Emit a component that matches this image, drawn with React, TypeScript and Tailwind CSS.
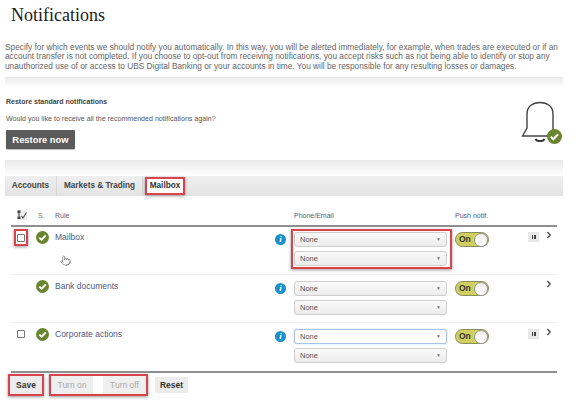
import { ChevronRight, Pointer } from "lucide-react";

const sans = "font-['Liberation_Sans',Arial,sans-serif]";

function CheckBadge({ className = "h-[13px] w-[13px]" }: { className?: string }) {
  return (
    <svg viewBox="0 0 14 14" className={className}>
      <circle cx="7" cy="7" r="7" fill="#6a8530" />
      <path d="M3.6 7.2 6 9.6 10.4 4.8" fill="none" stroke="#fff" strokeWidth="2" />
    </svg>
  );
}

function Bell() {
  return (
    <div className="relative h-[42px] w-[42px]">
      <svg viewBox="0 0 42 42" className="h-full w-full">
        <path
          d="M1.500 36 6 28V14C6 6 12 2.500 19 2.500S32 6 32 14V36Z"
          fill="none"
          stroke="#444"
          strokeWidth="1.400"
        />
        <path d="M14.500 39C16 42 22 42 23.500 39" fill="none" stroke="#333" strokeWidth="1.800" />
      </svg>
      <CheckBadge className="absolute left-[25.500px] top-[28.500px] h-[15px] w-[15px]" />
    </div>
  );
}

function Info() {
  return (
    <div className="flex h-[11px] w-[11px] items-center justify-center rounded-full bg-[#1b8fca] font-['Liberation_Serif',serif] text-[9px] font-bold italic leading-none text-white">
      i
    </div>
  );
}

function Dropdown({ focused = false }: { focused?: boolean }) {
  return (
    <div
      className={`flex h-[15px] w-[153px] items-center justify-between rounded-[3px] border pl-[5px] pr-[5px] text-[7.500px] text-[#555] ${
        focused
          ? "border-[#a9c3e6] bg-white shadow-[0_0_2px_#b9d0ee]"
          : "border-[#cfcfcf] bg-gradient-to-b from-[#fafafa] to-[#ececec]"
      }`}
    >
      <span>None</span>
      <span className="text-[5px] text-[#777]">▼</span>
    </div>
  );
}

function Toggle() {
  return (
    <div className="flex h-[15px] w-[34px] items-center justify-between rounded-full border border-[#8a8a5a] bg-[#cfd060] pl-[3px] text-[8.500px] font-bold leading-none text-[#333]">
      <span>On</span>
      <span className="h-[14px] w-[14px] rounded-full border border-[#999] bg-gradient-to-b from-[#eee] to-[#fff]" />
    </div>
  );
}

function Row({
  name,
  box,
  pause,
  outlined,
  focused,
  boxOutlined,
  extra,
  last,
}: {
  name: string;
  box?: boolean;
  pause?: boolean;
  outlined?: boolean;
  focused?: boolean;
  boxOutlined?: boolean;
  extra?: boolean;
  last?: boolean;
}) {
  const selects = (
    <div className="flex flex-col gap-[4px]">
      <Dropdown focused={focused} />
      <Dropdown />
    </div>
  );
  return (
    <div className={`flex h-[48px] ${outlined ? "pt-[5px]" : "pt-[6px]"} ${last ? "" : "border-b border-[#efefef]"}`}>
      <div className="flex w-[20px] items-start justify-center pt-[1px]">
        {box && (
          <div
            className={
              boxOutlined
                ? "relative z-10 -mt-[4px] flex h-[17px] w-[14px] items-center justify-center border-2 border-[#d9434c] shadow-[0_1px_3px_#999]"
                : ""
            }
          >
            <div className="h-[8px] w-[8px] rounded-[1px] border border-[#777] bg-white" />
          </div>
        )}
      </div>
      <div className="flex w-[22px] items-start justify-center">
        <div className="-mt-[1px]">
          <CheckBadge />
        </div>
      </div>
      <div className="relative w-[222px] pl-[2px] text-[8.500px] leading-[10px] text-[#4c5a82]">
        {name}
        {extra && <Pointer className="absolute left-[7px] top-[21px] h-[15px] w-[11px] text-[#555]" strokeWidth={1.200} />}
      </div>
      <div className="w-[19px] pt-[2px]">
        <Info />
      </div>
      <div className="w-[161px]">
        {outlined ? (
          <div className="-ml-[3px] -mt-[3px] w-[161px] border-2 border-[#d9434c] p-[1px] shadow-[0_1px_3px_#999]">{selects}</div>
        ) : (
          selects
        )}
      </div>
      <div className="w-[73px]">
        <Toggle />
      </div>
      <div className="w-[16px]">
        {pause && (
          <div className="flex h-[10px] w-[11px] items-center justify-center gap-[1px] bg-[#e8e8e8]">
            <span className="h-[4px] w-[1.500px] bg-[#444]" />
            <span className="h-[4px] w-[1.500px] bg-[#444]" />
          </div>
        )}
      </div>
      <ChevronRight className="-mt-[2px] h-[10px] w-[10px] text-[#444]" strokeWidth={3} />
    </div>
  );
}

export default function App() {
  return (
    <div className={`${sans} h-[400px] w-[580px] overflow-hidden bg-white`}>
      <h1 className="h-[43px] pl-[11px] pt-[3px] font-['Liberation_Serif',serif] text-[18px] leading-[24px] text-[#222]">
        Notifications
      </h1>
      <p className="ml-[5px] h-[34px] w-[560px] text-[8.300px] leading-[9.300px] text-[#666]">
        Specify for which events we should notify you automatically. In this way, you will be alerted immediately, for example, when trades are executed or if an
        account transfer is not completed. If you choose to opt-out from receiving notifications, you accept risks such as not being able to identify or stop any
        unauthorized use of or access to UBS Digital Banking or your accounts in time. You will be responsible for any resulting losses or damages.
      </p>
      <div className="ml-[5px] h-[83px] w-[558px] bg-gradient-to-b from-[#e9e9e9] via-white via-[12%] to-white">
        <div className="flex justify-between">
          <div className="pl-[1px] pt-[20px]">
            <div className="text-[7px] font-bold leading-[9px] text-[#444]">Restore standard notifications</div>
            <div className="mt-[9px] text-[7.100px] leading-[9px] text-[#555]">Would you like to receive all the recommended notifications again?</div>
            <button className="mt-[6px] h-[19px] w-[69px] rounded-[1px] bg-[#5b5b5b] text-[9.400px] font-bold leading-none text-white shadow-[0_1px_1px_#bbb]">
              Restore now
            </button>
          </div>
          <div className="pt-[23px]">
            <Bell />
          </div>
        </div>
      </div>
      <div className="ml-[5px] h-[16px] w-[558px] bg-gradient-to-b from-[#e9e9e9] to-white" />
      <div className="ml-[5px] flex h-[20px] w-[558px] items-stretch bg-gradient-to-b from-[#efefef] to-[#e3e3e3] text-[8.200px] font-bold text-[#444]">
        <div className="flex w-[52px] items-center justify-center border-r border-[#d8d8d8]">Accounts</div>
        <div className="flex w-[86px] items-center justify-center border-r border-[#d8d8d8]">Markets &amp; Trading</div>
        <div className="ml-[2px] flex h-[18px] w-[40px] items-center justify-center self-center border-2 border-[#d9434c] bg-white text-[#333] shadow-[0_1px_3px_#999]">
          Mailbox
        </div>
      </div>
      <div className="ml-[11px] mt-[14px] w-[546px]">
        <div className="flex h-[17px] items-start border-b-2 border-[#8f8f8f] text-[7px] text-[#4c5a82]">
          <div className="flex w-[21px] justify-center">
            <svg viewBox="0 0 10 10" className="h-[10px] w-[10px] bg-[#eeeeee]">
              <rect x="0.500" y="0.500" width="3" height="2.500" fill="#444" />
              <rect x="0.500" y="6.500" width="3" height="2.500" fill="#444" />
              <path d="M2 3V6.500M4.500 6 6 8 9.500 2.500" fill="none" stroke="#555" strokeWidth="1.200" />
            </svg>
          </div>
          <div className="w-[23px] pl-[6px] pt-[1px] text-[#777]">S.</div>
          <div className="w-[239px] pt-[1px]">Rule</div>
          <div className="w-[161px] pt-[1px]">Phone/Email</div>
          <div className="pt-[1px]">Push notif.</div>
        </div>
        <Row name="Mailbox" box boxOutlined pause outlined extra />
        <Row name="Bank documents" />
        <Row name="Corporate actions" box pause focused last />
      </div>
      <div className="ml-[11px] h-[2px] w-[546px] bg-[#8f8f8f]" />
      <div className="ml-[8px] mt-[1px] flex items-center gap-[5px] text-[8.500px] font-bold text-[#333]">
        <button className="h-[22px] w-[36px] border-2 border-[#d9434c] bg-[#ececec] shadow-[0_1px_3px_#999]">Save</button>
        <div className="flex h-[22px] w-[99px] items-stretch border-2 border-[#d9434c] font-normal text-[#aaa] shadow-[0_1px_3px_#999]">
          <span className="flex w-[42px] items-center justify-center bg-[#efefef]">Turn on</span>
          <span className="w-[10px] bg-white" />
          <span className="flex flex-1 items-center justify-center bg-[#efefef]">Turn off</span>
        </div>
        <button className="ml-[2px] h-[16px] w-[33px] bg-[#ececec]">Reset</button>
      </div>
    </div>
  );
}
